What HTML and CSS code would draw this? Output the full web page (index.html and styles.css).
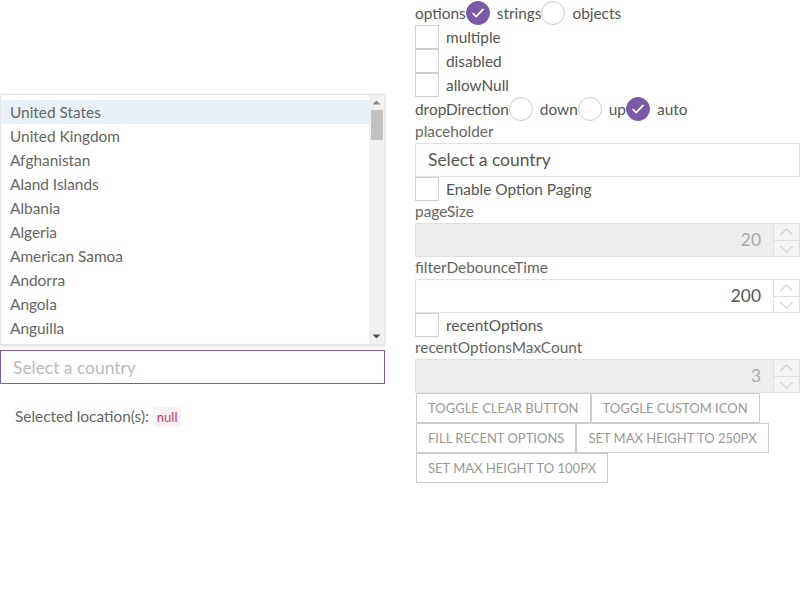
FILE: index.html
```html
<!DOCTYPE html>
<html>
<head>
<meta charset="utf-8">
<link rel="stylesheet" href="styles.css">
</head>
<body>
<div class="page">
  <div class="left">
    <div class="combo">
      <div class="popup">
        <ul class="listbox">
          <li class="active">United States</li>
          <li>United Kingdom</li>
          <li>Afghanistan</li>
          <li>Aland Islands</li>
          <li>Albania</li>
          <li>Algeria</li>
          <li>American Samoa</li>
          <li>Andorra</li>
          <li>Angola</li>
          <li>Anguilla</li>
          <li>Antarctica</li>
          <li>Antigua and Barbuda</li>
        </ul>
        <div class="scrollbar">
          <span class="sb-btn"><svg viewBox="0 0 15 15" width="15" height="15"><path d="M3.5 9.5h8l-4-4z" fill="#888"/></svg></span>
          <span class="sb-track"><span class="sb-thumb"></span></span>
          <span class="sb-btn"><svg viewBox="0 0 15 15" width="15" height="15"><path d="M3.5 5.5h8l-4 4z" fill="#505050"/></svg></span>
        </div>
      </div>
      <input class="combo-input" type="text" placeholder="Select a country">
    </div>
    <p class="selected">Selected location(s): <code>null</code></p>
  </div>
  <div class="right">
    <div class="row">
      <span>options</span>
      <span class="radio checked"><svg viewBox="0 0 24 24"><path d="M6 12l4 4 8-8.5" fill="none" stroke="#fff" stroke-width="1.8"/></svg></span>
      <span class="opt">strings</span>
      <span class="radio"></span>
      <span class="opt">objects</span>
    </div>
    <div class="row"><span class="box"></span><span class="opt">multiple</span></div>
    <div class="row"><span class="box"></span><span class="opt">disabled</span></div>
    <div class="row"><span class="box"></span><span class="opt">allowNull</span></div>
    <div class="row">
      <span>dropDirection</span>
      <span class="radio"></span>
      <span class="opt">down</span>
      <span class="radio"></span>
      <span class="opt">up</span>
      <span class="radio checked"><svg viewBox="0 0 24 24"><path d="M6 12l4 4 8-8.5" fill="none" stroke="#fff" stroke-width="1.8"/></svg></span>
      <span class="opt">auto</span>
    </div>
    <div class="label">placeholder</div>
    <div class="text-field">Select a country</div>
    <div class="row"><span class="box"></span><span class="opt">Enable Option Paging</span></div>
    <div class="label">pageSize</div>
    <div class="num disabled"><span class="num-val">20</span><span class="spin"><span class="up"></span><span class="down"></span></span></div>
    <div class="label">filterDebounceTime</div>
    <div class="num"><span class="num-val">200</span><span class="spin"><span class="up"></span><span class="down"></span></span></div>
    <div class="row"><span class="box"></span><span class="opt">recentOptions</span></div>
    <div class="label">recentOptionsMaxCount</div>
    <div class="num disabled"><span class="num-val">3</span><span class="spin"><span class="up"></span><span class="down"></span></span></div>
    <div class="buttons">
      <button class="btn">Toggle clear button</button><button class="btn">Toggle custom icon</button><button class="btn">Fill recent options</button><button class="btn">Set max height to 250px</button><button class="btn">Set max height to 100px</button>
    </div>
  </div>
</div>
</body>
</html>
```

FILE: styles.css
```css
* { box-sizing: border-box; }
body {
  margin: 0;
  font-family: "Lato", "Liberation Sans", sans-serif;
  font-size: 15.4px;
  color: #555;
  background: #fff;
}
.page {
  display: flex;
  gap: 30px;
}
.left {
  width: 385px;
  flex: none;
  padding-top: 350px;
}
.combo {
  position: relative;
}
.popup {
  position: absolute;
  left: 0;
  right: 0;
  bottom: calc(100% + 5px);
  height: 251px;
  display: flex;
  background: #fff;
  border: 1px solid #e4e4e4;
  box-shadow: 0 1px 3px rgba(0,0,0,0.15);
  overflow: hidden;
}
.listbox {
  flex: 1;
  margin: 0;
  padding: 5px 0 0;
  list-style: none;
  overflow: hidden;
}
.listbox li {
  height: 24px;
  line-height: 24px;
  padding-left: 9px;
  color: #666;
  white-space: nowrap;
}
.listbox li.active {
  background: #e8f0f8;
}
.scrollbar {
  width: 15px;
  flex: none;
  display: flex;
  flex-direction: column;
  background: #f1f1f1;
}
.sb-btn {
  height: 15px;
  flex: none;
  display: block;
}
.sb-btn svg { display: block; }
.sb-track {
  flex: 1;
  padding: 0 1px 0 2px;
}
.sb-thumb {
  display: block;
  height: 30px;
  background: #c1c1c1;
}
.combo-input {
  display: block;
  width: 385px;
  height: 34px;
  margin: 0;
  padding: 0 12px;
  border: 1px solid #7b5ea7;
  font-family: inherit;
  font-size: 17.4px;
  color: #555;
  outline: none;
}
.combo-input::placeholder { color: #bbb; }
.selected {
  margin: 21px 0 0 15px;
  color: #666;
  line-height: 22px;
}
.selected code {
  font-family: "Lato", sans-serif;
  font-size: 13px;
  color: #d6336c;
  background: #f8f2f4;
  padding: 2px 4px;
  border-radius: 3px;
}
.right {
  width: 385px;
  flex: none;
  padding-top: 1px;
}
.row {
  display: flex;
  align-items: center;
  height: 24px;
  line-height: 24px;
}
.opt { margin-left: 7px; }
.radio {
  width: 24px;
  height: 24px;
  border-radius: 50%;
  border: 1px solid #ccc;
  flex: none;
  display: inline-flex;
}
.radio.checked {
  background: #7b5ba6;
  border-color: #7b5ba6;
}
.radio svg { width: 22px; height: 22px; }
.box {
  width: 24px;
  height: 24px;
  border: 1px solid #d0d0d0;
  flex: none;
}
.label {
  height: 22px;
  line-height: 20px;
  color: #666;
}
.text-field {
  height: 34px;
  border: 1px solid #e0e0e0;
  padding: 0 12px;
  line-height: 32px;
  font-size: 17.4px;
  color: #555;
}
.num {
  display: flex;
  height: 34px;
  border: 1px solid #e0e0e0;
  border-right: none;
}
.num-val {
  flex: 1;
  text-align: right;
  padding-right: 12px;
  line-height: 32px;
  font-size: 17.4px;
  color: #555;
}
.num.disabled { background: #eee; }
.num.disabled .num-val { color: #aaa; }
.spin {
  width: 27px;
  display: flex;
  flex-direction: column;
  border-left: 1px solid #e0e0e0;
  border-right: 1px solid #e0e0e0;
  background: #fff;
}
.num.disabled .spin { background: #f4f4f4; }
.spin span {
  flex: 1;
  position: relative;
}
.spin .up { border-bottom: 1px solid #e0e0e0; }
.spin span::after {
  content: "";
  position: absolute;
  left: 8px;
  width: 8px;
  height: 8px;
  border-left: 1px solid #c8c8c8;
  border-top: 1px solid #c8c8c8;
}
.spin .up::after { top: 6px; transform: rotate(45deg); }
.spin .down::after { top: 1px; transform: rotate(-135deg); }
.buttons {
  display: flex;
  flex-wrap: wrap;
  padding-left: 1px;
}
.btn {
  height: 30px;
  margin: 0;
  padding: 0 11px;
  background: #fff;
  border: 1px solid #ccc;
  font-family: inherit;
  font-size: 13px;
  text-transform: uppercase;
  color: #999;
}
```
